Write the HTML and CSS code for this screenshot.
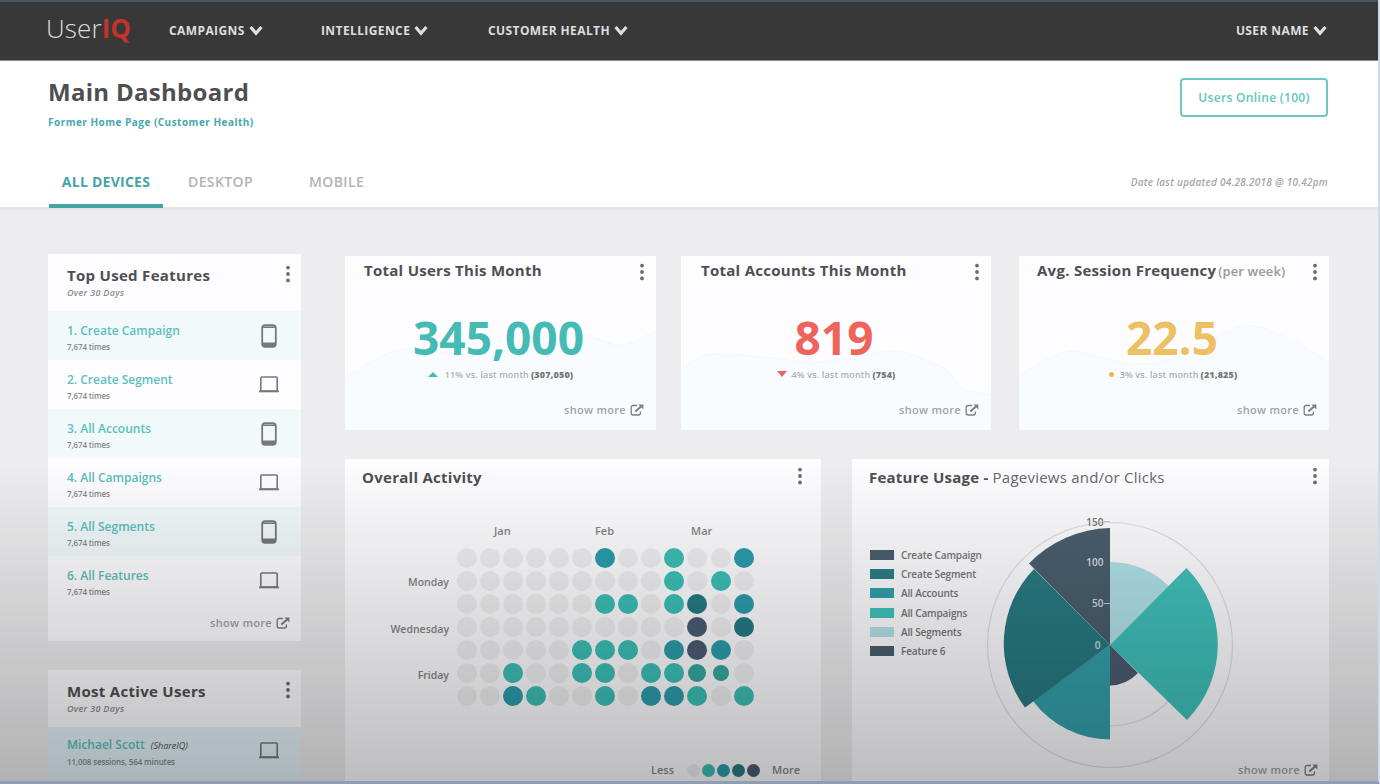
FILE: index.html
```html
<!DOCTYPE html>
<html lang="en">
<head>
    <meta charset="UTF-8">
    <meta name="viewport" content="width=device-width, initial-scale=1.0">
    <title>UserIQ - Main Dashboard</title>
    <link rel="stylesheet" href="styles.css">
</head>
<body>

    <!-- Shared icons -->
    <svg class="icon-defs" width="0" height="0">
        <symbol id="chevron" viewBox="0 0 14 11">
            <path d="M1.6 2 L7 8.2 L12.4 2" fill="none" stroke="currentColor" stroke-width="3.2"/>
        </symbol>
        <symbol id="dots" viewBox="0 0 6 20">
            <circle cx="3" cy="3.6" r="1.9"/>
            <circle cx="3" cy="10" r="1.9"/>
            <circle cx="3" cy="16.4" r="1.9"/>
        </symbol>
        <symbol id="external" viewBox="0 0 14 12">
            <path d="M7 1.5 H3.2 Q1.2 1.5 1.2 3.5 V9 Q1.2 11 3.2 11 H8.4 Q10.4 11 10.4 9 V7.4" fill="none" stroke="currentColor" stroke-width="1.3"/>
            <path d="M5.4 7.4 L11 2.6" fill="none" stroke="currentColor" stroke-width="2"/>
            <path d="M8.4 0.4 H13.4 V5.4 Z" fill="currentColor"/>
        </symbol>
        <symbol id="phone" viewBox="0 0 16 24">
            <rect x="1.2" y="1.2" width="13.6" height="21.6" rx="3" fill="none" stroke="currentColor" stroke-width="1.8"/>
            <path d="M1.5 3.2 H14.5" stroke="currentColor" stroke-width="1.6"/>
            <path d="M1.5 18.4 H14.5 V20 Q14.5 22.6 12 22.6 H4 Q1.5 22.6 1.5 20 Z" fill="currentColor"/>
        </symbol>
        <symbol id="laptop" viewBox="0 0 20 17">
            <rect x="1.8" y="1" width="16.4" height="14" rx="1" fill="none" stroke="currentColor" stroke-width="1.6"/>
            <path d="M0 15.4 H20" stroke="currentColor" stroke-width="1.8"/>
        </symbol>
    </svg>

    <!-- Top Navigation Bar -->
    <div class="navbar">
        <div class="logo">User<b>IQ</b></div>
        <div class="nav-links">
            <a class="nav-campaigns">CAMPAIGNS <svg class="chevron"><use href="#chevron"/></svg></a>
            <a class="nav-intelligence">INTELLIGENCE <svg class="chevron"><use href="#chevron"/></svg></a>
            <a class="nav-health">CUSTOMER HEALTH <svg class="chevron"><use href="#chevron"/></svg></a>
        </div>
        <a class="nav-user">USER NAME <svg class="chevron"><use href="#chevron"/></svg></a>
    </div>

    <!-- Page title and device tabs -->
    <div class="page-header">
        <div class="title-row">
            <div>
                <h1>Main Dashboard</h1>
                <a class="former-link">Former Home Page (Customer Health)</a>
            </div>
            <button class="online-button">Users Online (100)</button>
        </div>
        <div class="tab-row">
            <a class="tab active"><span>ALL DEVICES</span></a>
            <a class="tab tab-desktop"><span>DESKTOP</span></a>
            <a class="tab tab-mobile"><span>MOBILE</span></a>
            <p class="updated">Date last updated 04.28.2018 @ 10.42pm</p>
        </div>
    </div>

    <div class="main">
        <div class="sidebar">
            <div class="card features-card">
                <div class="side-head">
                    <div>
                        <h2>Top Used Features</h2>
                        <p class="period">Over 30 Days</p>
                    </div>
                    <svg class="dots"><use href="#dots"/></svg>
                </div>
                <ul class="side-list">
                    <li><div><a>1. Create Campaign</a><p>7,674 times</p></div><svg class="phone"><use href="#phone"/></svg></li>
                    <li><div><a>2. Create Segment</a><p>7,674 times</p></div><svg class="laptop"><use href="#laptop"/></svg></li>
                    <li><div><a>3. All Accounts</a><p>7,674 times</p></div><svg class="phone"><use href="#phone"/></svg></li>
                    <li><div><a>4. All Campaigns</a><p>7,674 times</p></div><svg class="laptop"><use href="#laptop"/></svg></li>
                    <li><div><a>5. All Segments</a><p>7,674 times</p></div><svg class="phone"><use href="#phone"/></svg></li>
                    <li><div><a>6. All Features</a><p>7,674 times</p></div><svg class="laptop"><use href="#laptop"/></svg></li>
                </ul>
                <a class="show-more">show more <svg class="external"><use href="#external"/></svg></a>
            </div>

            <div class="card users-card">
                <div class="side-head">
                    <div>
                        <h2>Most Active Users</h2>
                        <p class="period">Over 30 Days</p>
                    </div>
                    <svg class="dots"><use href="#dots"/></svg>
                </div>
                <ul class="side-list">
                    <li><div><a>Michael Scott</a> <i>(ShareIQ)</i><p>11,008 sessions, 564 minutes</p></div><svg class="laptop"><use href="#laptop"/></svg></li>
                </ul>
            </div>
        </div>

        <div class="content">
            <div class="metrics">
                <div class="card metric">
                    <svg class="spark" viewBox="0 0 311 174" preserveAspectRatio="none">
                        <path d="M0 121 C20 112 35 96 60 93 C85 92 100 98 125 99 C160 98 180 88 205 80 C235 74 250 82 272 90 C290 88 298 80 311 76 V174 H0 Z"/>
                    </svg>
                    <div class="card-head">
                        <h3>Total Users This Month</h3>
                        <svg class="dots"><use href="#dots"/></svg>
                    </div>
                    <div class="number teal">345,000</div>
                    <p class="trend users-trend"><span class="up"></span>11% vs. last month <b>(307,050)</b></p>
                    <a class="show-more">show more <svg class="external"><use href="#external"/></svg></a>
                </div>

                <div class="card metric accounts">
                    <svg class="spark" viewBox="0 0 311 174" preserveAspectRatio="none">
                        <path d="M0 113 C12 104 20 99 35 98 C65 99 90 101 120 106 C160 108 185 96 215 95 C230 96 245 104 262 111 C275 118 275 127 284 134 C295 136 302 138 311 138 V174 H0 Z"/>
                    </svg>
                    <div class="card-head">
                        <h3>Total Accounts This Month</h3>
                        <svg class="dots"><use href="#dots"/></svg>
                    </div>
                    <div class="number red">819</div>
                    <p class="trend accounts-trend"><span class="down"></span>4% vs. last month <b>(754)</b></p>
                    <a class="show-more">show more <svg class="external"><use href="#external"/></svg></a>
                </div>

                <div class="card metric sessions">
                    <svg class="spark" viewBox="0 0 311 174" preserveAspectRatio="none">
                        <path d="M0 118 C18 112 25 99 54 95 C75 97 85 104 115 108 C155 110 180 88 208 76 C222 67 240 68 260 78 C280 86 295 96 311 106 V174 H0 Z"/>
                    </svg>
                    <div class="card-head">
                        <h3>Avg. Session Frequency<small>(per week)</small></h3>
                        <svg class="dots"><use href="#dots"/></svg>
                    </div>
                    <div class="number yellow">22.5</div>
                    <p class="trend sessions-trend"><span class="flat"></span>3% vs. last month <b>(21,825)</b></p>
                    <a class="show-more">show more <svg class="external"><use href="#external"/></svg></a>
                </div>
            </div>

            <div class="charts">
                <div class="card activity">
                    <div class="card-head">
                        <h3>Overall Activity</h3>
                        <svg class="dots"><use href="#dots"/></svg>
                    </div>
                    <div class="months"><span>Jan</span><span>Feb</span><span>Mar</span></div>
                    <div class="heat">
                        <div class="days"><span>Monday</span><span>Wednesday</span><span>Friday</span></div>
                        <div class="heat-grid" id="heat-grid"></div>
                    </div>
                    <div class="scale">
                        <span>Less</span>
                        <div class="scale-dots"><i class="l0"></i><i class="l1"></i><i class="l2"></i><i class="l3"></i><i class="l4"></i></div>
                        <span>More</span>
                    </div>
                </div>

                <div class="card usage">
                    <div class="card-head">
                        <h3>Feature Usage - <span>Pageviews and/or Clicks</span></h3>
                        <svg class="dots"><use href="#dots"/></svg>
                    </div>
                    <div class="usage-body">
                        <ul class="legend">
                            <li><i class="c1"></i>Create Campaign</li>
                            <li><i class="c2"></i>Create Segment</li>
                            <li><i class="c3"></i>All Accounts</li>
                            <li><i class="c4"></i>All Campaigns</li>
                            <li><i class="c5"></i>All Segments</li>
                            <li><i class="c6"></i>Feature 6</li>
                        </ul>
                        <svg class="polar" viewBox="-125 -129 250 258">
                            <circle class="ring" r="122.5"/>
                            <circle class="ring" r="81"/>
                            <path fill="#b0e2ea" d="M0 0 V-83 A83 83 0 0 1 59 -58.5 Z"/>
                            <path fill="#40c0b9" d="M0 0 L76.5 -77 A108.5 108.5 0 0 1 77 75 Z"/>
                            <path fill="#4b5c70" d="M0 0 L28 28 A40 40 0 0 1 0 40.5 Z"/>
                            <path fill="#34a0aa" d="M0 0 V94.5 A97 97 0 0 1 -77 56 Z"/>
                            <path fill="#297a82" d="M0 0 L-85 62.5 A107 107 0 0 1 -76 -76 Z"/>
                            <path fill="#4a5f6f" d="M0 0 L-81 -81.5 A117 117 0 0 1 0 -117 Z"/>
                            <path class="tick" d="M-6 -123.5 H0 M-6 -41.5 H0"/>
                            <text class="dark" x="-6.5" y="-119.5">150</text>
                            <text x="-6.5" y="-79">100</text>
                            <text x="-6.5" y="-38">50</text>
                            <text x="-9.5" y="3.5">0</text>
                        </svg>
                    </div>
                    <a class="show-more">show more <svg class="external"><use href="#external"/></svg></a>
                </div>
            </div>
        </div>
    </div>

    <div class="shade"></div>

<script>
// Activity level for each day, one string per weekday
const activity = [
    "0000002001002",
    "0000000001010",
    "0000001101302",
    "0000000000403",
    "0000011102420",
    "0010011011560",
    "0021001022101"
];

const grid = document.getElementById('heat-grid');
activity.forEach(row => {
    row.split('').forEach(level => {
        const dot = document.createElement('i');
        dot.className = 'l' + level;
        grid.appendChild(dot);
    });
});
</script>
</body>
</html>
```
FILE: styles.css
```css
/* General styling */
* {
    margin: 0;
    padding: 0;
    box-sizing: border-box;
}

body {
    width: 1380px;
    height: 784px;
    overflow: hidden;
    background-color: #ededef;
    font-family: "Open Sans", sans-serif;
    color: #4f4f51;
}

ul {
    list-style: none;
}

p, a, span, h1, h2, h3 {
    white-space: nowrap;
}

.icon-defs {
    position: absolute;
}

/* Navigation */
.navbar {
    display: flex;
    align-items: center;
    height: 61px;
    padding: 0 53px 1px 46px;
    background-color: #393839;
    border-top: 2px solid #485360;
    border-bottom: 1px solid #8b8b8c;
    color: #dededf;
}

.logo {
    width: 123px;
    font-size: 26px;
    font-weight: 300;
    line-height: 30px;
    letter-spacing: 0.1px;
    padding-bottom: 6px;
}

.logo b {
    font-weight: 700;
    color: #c4322e;
}

.nav-links {
    display: flex;
    flex-grow: 1;
}

.navbar a {
    display: flex;
    align-items: center;
    font-size: 12px;
    font-weight: 700;
    letter-spacing: 0.4px;
}

.nav-campaigns {
    width: 152px;
}

.nav-intelligence {
    width: 167px;
}

.chevron {
    width: 14px;
    height: 11px;
    margin-left: 4px;
}

/* Page header */
.page-header {
    height: 149px;
    padding: 16px 52px 0 48px;
    background-color: #fff;
    border-bottom: 3px solid #e4e4e6;
}

.title-row {
    display: flex;
    justify-content: space-between;
    height: 83px;
}

h1 {
    margin-top: -1px;
    font-size: 24px;
    font-weight: 700;
    line-height: 32px;
    letter-spacing: 0.3px;
}

.former-link {
    display: block;
    margin-top: 7px;
    font-size: 10px;
    font-weight: 700;
    line-height: 14px;
    letter-spacing: 0.48px;
    color: #46a9ae;
}

.online-button {
    width: 148px;
    height: 39px;
    margin-top: 1px;
    border: 2px solid #6cc8c2;
    border-radius: 4px;
    background: #fff;
    font-family: inherit;
    font-size: 12px;
    font-weight: 600;
    letter-spacing: 0.33px;
    color: #5cc5bf;
}

.tab-row {
    display: flex;
    height: 48px;
}

.tab {
    padding-top: 13px;
    font-size: 14px;
    font-weight: 600;
    line-height: 18px;
    letter-spacing: 0.4px;
    color: #b3b3b5;
}

.tab.active {
    width: 114px;
    margin-left: 1px;
    text-align: center;
    font-weight: 700;
    letter-spacing: 0.25px;
    color: #46a3a8;
    border-bottom: 4px solid #46a3a3;
}

.tab-desktop {
    width: 146px;
    padding-left: 25px;
}

.updated {
    margin-left: auto;
    padding-top: 14px;
    font-size: 10px;
    font-style: italic;
    font-weight: 600;
    line-height: 16px;
    letter-spacing: 0.27px;
    color: #a5a5a8;
}

/* Layout */
.main {
    display: flex;
    gap: 44px;
    padding: 44px 51px 0 48px;
}

.sidebar {
    display: flex;
    flex-direction: column;
    flex-shrink: 0;
    gap: 29px;
    width: 253px;
}

.content {
    width: 984px;
    padding-top: 2px;
}

.card {
    background-color: #fdfcfe;
}

.dots {
    width: 6px;
    height: 20px;
    fill: #6c6c6f;
}

/* Sidebar cards */
.features-card {
    height: 387px;
}

.users-card {
    height: 114px;
}

.side-head {
    display: flex;
    justify-content: space-between;
    height: 57px;
    padding: 10px 10px 0 19px;
}

h2 {
    padding-top: 1px;
    font-size: 15px;
    font-weight: 700;
    line-height: 20px;
    letter-spacing: 0.3px;
}

.period {
    padding-top: 1px;
    font-size: 9px;
    font-style: italic;
    font-weight: 600;
    line-height: 13px;
    letter-spacing: 0.3px;
    color: #8b8b8e;
}

.side-list li {
    display: flex;
    justify-content: space-between;
    align-items: center;
    height: 49px;
    padding: 0 22px 0 19px;
}

.side-list li:nth-child(odd) {
    background-color: #f1f9fb;
}

.users-card .side-list li {
    height: 57px;
    padding-bottom: 11px;
    background-color: #e3f2f6;
}

.side-list div {
    padding-top: 4px;
    line-height: 16px;
}

.side-list a {
    font-size: 12px;
    font-weight: 600;
    color: #5bbfc0;
}

.side-list i {
    margin-left: 2px;
    font-size: 9px;
}

.side-list p {
    font-size: 8px;
    font-weight: 600;
    line-height: 15px;
    letter-spacing: -0.12px;
    color: #88888b;
}

.side-list svg {
    color: #77787b;
}

.phone {
    width: 16px;
    height: 24px;
    margin-right: 2px;
}

.laptop {
    width: 20px;
    height: 17px;
}

.show-more {
    display: flex;
    justify-content: flex-end;
    align-items: center;
    padding-right: 12px;
    font-size: 11px;
    font-weight: 600;
    line-height: 16px;
    letter-spacing: 0.3px;
    color: #a2a2a6;
}

.features-card .show-more {
    padding: 10px 11px 0 0;
}

.external {
    width: 14px;
    height: 12px;
    margin-left: 4px;
    color: #7c7d80;
}

/* Metric cards */
.metrics {
    display: flex;
    gap: 25px;
}

.metric {
    position: relative;
    width: 311px;
    height: 174px;
}

.accounts, .sessions {
    width: 310px;
}

.sessions {
    margin-left: 3px;
}

.spark {
    position: absolute;
    left: 0;
    top: 0;
    width: 100%;
    height: 174px;
    fill: #f9fcfe;
    stroke: #f3f8fa;
}

.metric > :not(.spark) {
    position: relative;
}

.card-head {
    display: flex;
    justify-content: space-between;
    padding: 6px 11px 0 19px;
}

.accounts .card-head {
    padding-left: 20px;
}

.sessions .card-head {
    padding-left: 18px;
}

h3 {
    font-size: 15px;
    font-weight: 700;
    line-height: 19px;
    letter-spacing: 0.27px;
}

.metric h3 {
    margin-top: -1px;
}

h3 small {
    margin-left: 2px;
    font-size: 13px;
    font-weight: 600;
    letter-spacing: 0.1px;
    color: #98989b;
}

.number {
    margin-top: 25px;
    padding-right: 4px;
    text-align: center;
    font-size: 46px;
    font-weight: 700;
    line-height: 60px;
}

.teal {
    color: #45bbb5;
}

.red {
    color: #ee645c;
}

.yellow {
    color: #edc163;
}

.trend {
    display: flex;
    align-items: center;
    justify-content: center;
    height: 16px;
    margin-top: -1px;
    font-size: 9px;
    font-weight: 600;
    letter-spacing: 0.15px;
    color: #aeaeb2;
}

.trend b {
    margin-left: 2px;
    color: #77777a;
}

.up, .down {
    margin-right: 7px;
    border-left: 5px solid transparent;
    border-right: 5px solid transparent;
}

.up {
    border-bottom: 5px solid #45bbb5;
}

.down {
    margin-right: 5px;
    border-top: 6px solid #ee645c;
}

.flat {
    width: 5px;
    height: 5px;
    margin-right: 6px;
    border-radius: 50%;
    background-color: #edb950;
}

.sessions-trend {
    padding-right: 2px;
}

.metric .show-more {
    margin-top: 20px;
}

/* Chart cards */
.charts {
    display: flex;
    justify-content: space-between;
    margin-top: 29px;
}

.activity, .usage {
    height: 325px;
}

.activity {
    width: 476px;
}

.usage {
    width: 477px;
}

.charts .card-head {
    padding: 7px 18px 0 17px;
}

.usage .card-head {
    padding-right: 11px;
}

.charts h3 {
    padding-top: 2px;
}

.usage h3 {
    letter-spacing: 0.23px;
}

.usage h3 span {
    font-weight: 400;
    color: #68686b;
}

.months {
    display: flex;
    margin-top: 36px;
    padding-left: 149px;
    font-size: 11px;
    font-weight: 600;
    line-height: 16px;
    color: #858588;
}

.months span {
    width: 101px;
}

.months span:nth-child(2) {
    width: 96px;
}

.heat {
    display: flex;
    margin-top: 9px;
}

.days {
    display: flex;
    flex-direction: column;
    gap: 30.6px;
    width: 104px;
    margin-right: 8px;
    padding-top: 26px;
    text-align: right;
    font-size: 10.5px;
    font-weight: 600;
    line-height: 16px;
    color: #858588;
}

.heat-grid {
    display: grid;
    grid-template-columns: repeat(13, 20px);
    grid-auto-rows: 20px;
    gap: 3.05px;
}

.heat-grid i {
    border-radius: 50%;
}

.l0 { background-color: #efeef0; }
.l1 { background-color: #3cbfb6; }
.l2 { background-color: #2c9dab; }
.l3 { background-color: #267c85; }
.l4 { background-color: #4a5d72; }
.l5 { background-color: #37a99c; }
.l6 { background-color: #37a99c; }

.heat-grid .l5 {
    margin: 1px;
}

.heat-grid .l6 {
    margin: 2px;
}

.scale {
    display: flex;
    align-items: center;
    justify-content: flex-end;
    margin-top: 56px;
    padding-right: 21px;
    font-size: 11px;
    font-weight: 600;
    line-height: 16px;
    color: #858588;
}

.scale-dots {
    display: flex;
    gap: 2px;
    margin: 0 12px 0 13px;
}

.scale-dots i {
    width: 13px;
    height: 13px;
    border-radius: 50%;
}

.usage-body {
    display: flex;
    height: 271px;
    padding-left: 18px;
}

.legend {
    width: 115px;
    padding-top: 58px;
}

.legend li {
    display: flex;
    align-items: center;
    height: 19.3px;
    font-size: 10px;
    font-weight: 600;
    letter-spacing: -0.14px;
    white-space: nowrap;
    color: #77777a;
}

.legend i {
    width: 24px;
    height: 10px;
    margin-right: 7px;
}

.c1 { background-color: #4a6070; }
.c2 { background-color: #2b7f86; }
.c3 { background-color: #32a2aa; }
.c4 { background-color: #40c4bc; }
.c5 { background-color: #b2e2e8; }
.c6 { background-color: #4a5f70; }

.polar {
    width: 250px;
    height: 258px;
    margin-top: 29px;
}

.ring {
    fill: none;
    stroke: #e0dfe1;
    stroke-width: 1.2;
}

.tick {
    stroke: #c3cdd3;
}

.polar text {
    font-size: 10px;
    font-weight: 600;
    text-anchor: end;
    fill: #d5dde2;
}

.polar .dark {
    fill: #77777a;
}

.usage .show-more {
    margin-top: 4px;
    padding-right: 11px;
}

/* Fade to grey over the lower half of the page, plus the frame edges */
.shade {
    position: fixed;
    left: 0;
    top: 0;
    width: 1380px;
    height: 784px;
    border-right: 2px solid #cddaf0;
    border-bottom: 3px solid #919db3;
    background: linear-gradient(rgba(0, 0, 0, 0) 460px, rgba(0, 0, 0, 0.25) 784px);
    pointer-events: none;
}
```
